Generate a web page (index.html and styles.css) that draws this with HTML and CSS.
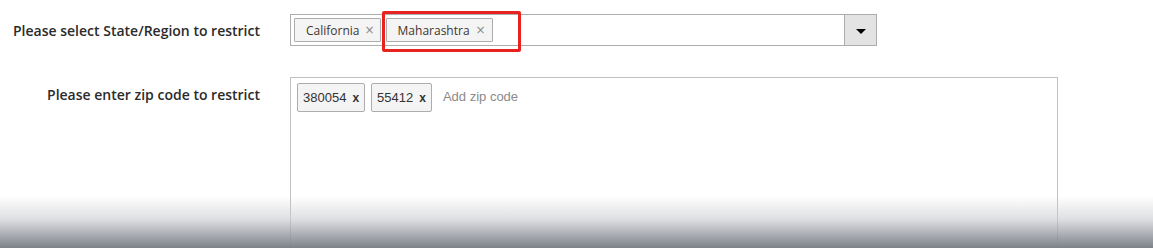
FILE: index.html
```html
<!DOCTYPE html>
<html>
<head>
<meta charset="utf-8">
<link rel="stylesheet" href="styles.css">
</head>
<body>
<div class="page">
  <div class="row row-select">
    <div class="label">Please select State/Region to restrict</div>
    <div class="control">
      <div class="select">
        <div class="choices">
          <span class="chip">California<span class="chip-x">×</span></span>
          <span class="chip chip-hl">Maharashtra<span class="chip-x">×</span><span class="highlight"></span></span>
        </div>
        <div class="arrow"><span class="caret"></span></div>
      </div>
    </div>
  </div>
  <div class="row row-zip">
    <div class="label label-zip">Please enter zip code to restrict</div>
    <div class="control">
      <div class="zipbox">
        <span class="ztag">380054<b class="ztag-x">x</b></span>
        <span class="ztag">55412<b class="ztag-x">x</b></span>
        <span class="zplaceholder">Add zip code</span>
      </div>
    </div>
  </div>
  <div class="fade"></div>
</div>
</body>
</html>
```

FILE: styles.css
```css
html, body {
  margin: 0;
  padding: 0;
  background: #fff;
}
.page {
  position: relative;
  width: 1153px;
  height: 248px;
  overflow: hidden;
  font-family: "Open Sans", "Liberation Sans", sans-serif;
}
.row {
  display: flex;
  align-items: flex-start;
}
.row-select {
  padding-top: 14px;
}
.row-zip {
  padding-top: 31px;
}
.label {
  width: 260px;
  box-sizing: border-box;
  margin-right: 30px;
  text-align: right;
  font-size: 14px;
  font-weight: 600;
  color: #2b2b2b;
  line-height: 20px;
  padding-top: 7px;
  white-space: nowrap;
}
.label-zip {
  padding-top: 8px;
}
.select {
  display: flex;
  width: 587px;
  height: 32px;
  box-sizing: border-box;
  border: 1px solid #adadad;
  background: #fff;
}
.choices {
  flex: 1;
  display: flex;
  align-items: center;
  gap: 5px;
  padding-left: 3px;
}
.chip {
  position: relative;
  display: inline-flex;
  align-items: center;
  height: 24px;
  box-sizing: border-box;
  border: 1px solid #adadad;
  border-radius: 1px;
  background: #f4f4f4;
  padding: 0 5px 0 11px;
  font-size: 12px;
  color: #41362f;
}
.chip-hl {
  padding-right: 6px;
}
.chip-x {
  margin-left: 5px;
  font-size: 12px;
  color: #8a8a8a;
  font-family: "DejaVu Sans", sans-serif;
}
.chip-hl .chip-x {
  margin-left: 6px;
}
.highlight {
  position: absolute;
  left: -5px;
  top: -8px;
  width: 139px;
  height: 41px;
  box-sizing: border-box;
  border: 3px solid #e8231f;
  border-radius: 2px;
}
.arrow {
  width: 31px;
  border-left: 1px solid #adadad;
  background: #e3e3e3;
  display: flex;
  align-items: center;
  justify-content: center;
}
.caret {
  width: 0;
  height: 0;
  border-left: 5px solid transparent;
  border-right: 5px solid transparent;
  border-top: 5px solid #000;
  margin-top: 2px;
}
.zipbox {
  width: 768px;
  height: 220px;
  box-sizing: border-box;
  border: 1px solid #c2c2c2;
  background: #fff;
  display: flex;
  align-items: flex-start;
  gap: 6px;
  padding: 5px 6px;
}
.ztag {
  display: inline-flex;
  align-items: center;
  height: 29px;
  box-sizing: border-box;
  border: 1px solid #adadad;
  border-radius: 2px;
  background: #f4f4f4;
  padding: 0 5px 0 5px;
  font-family: "Liberation Sans", Arial, sans-serif;
  font-size: 13px;
  color: #333;
}
.ztag-x {
  margin-left: 6px;
  font-size: 12px;
  font-weight: 700;
  color: #333;
}
.zplaceholder {
  margin-left: 5px;
  line-height: 27px;
  font-family: "Liberation Sans", Arial, sans-serif;
  font-size: 13px;
  color: #8a8a8a;
}
.fade {
  position: absolute;
  left: 0;
  right: 0;
  bottom: 0;
  height: 52px;
  background: linear-gradient(to bottom, rgba(255,255,255,0) 0%, rgba(200,201,205,0.6) 45%, rgba(125,129,138,1) 100%);
  pointer-events: none;
}
```
